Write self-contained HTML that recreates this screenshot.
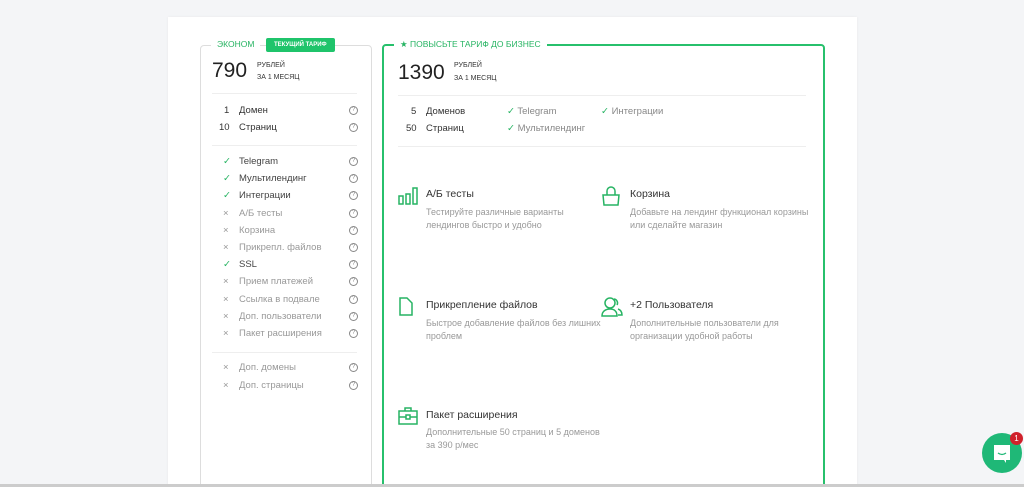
<!DOCTYPE html>
<html><head><meta charset="utf-8"><style>
*{margin:0;padding:0;box-sizing:border-box}
html,body{width:1024px;height:487px;overflow:hidden}
body{background:#f4f5f7;font-family:"Liberation Sans",sans-serif;position:relative}
.card{position:absolute;left:168px;top:17px;width:689px;height:470px;background:#fff;box-shadow:0 0 3px rgba(0,0,0,.05)}
.lb{position:absolute;left:200px;top:45px;width:172px;height:450px;border:1px solid #ddd;border-radius:4px}
.rb{position:absolute;left:382px;top:44px;width:443px;height:450px;border:2px solid #27c06c;border-radius:4px}
.a{position:absolute;white-space:nowrap}
.g{color:#27b463}
.hr{position:absolute;height:1px;background:#eee}
.q{position:absolute;width:9px;height:9px;border:1px solid #888;border-radius:50%;font-size:6px;line-height:7px;text-align:center;color:#888}
.t{font-size:9.5px;color:#333}
.s{font-size:7px;color:#333}
.ft{font-size:10.5px;color:#333}
.fd{font-size:9px;color:#999;line-height:13px}
</style></head><body>
<div class="card"></div>
<div class="lb"></div>
<div class="rb"></div>
<div class="a" style="left:211px;top:39px;background:#fff;padding:0 6px;font-size:8.5px;color:#27b463">ЭКОНОМ</div>
<div class="a" style="left:266px;top:38px;background:#1fc46b;color:#fff;font-size:6px;font-weight:bold;padding:3px 8px;border-radius:2px;height:14px;line-height:8px">ТЕКУЩИЙ ТАРИФ</div>
<div class="a" style="left:394px;top:39px;background:#fff;padding:0 6px;font-size:8.5px;color:#27b463">★ ПОВЫСЬТЕ ТАРИФ ДО БИЗНЕС</div>
<div class="a" style="left:212px;top:59px;font-size:21px;color:#222">790</div>
<div class="a s" style="left:257px;top:62px">РУБЛЕЙ</div>
<div class="a s" style="left:257px;top:74px">ЗА 1 МЕСЯЦ</div>
<div class="a" style="left:398px;top:61px;font-size:21px;color:#222">1390</div>
<div class="a s" style="left:454px;top:62px">РУБЛЕЙ</div>
<div class="a s" style="left:454px;top:75px">ЗА 1 МЕСЯЦ</div>
<div class="hr" style="left:212px;top:93px;width:145px"></div>
<div class="hr" style="left:212px;top:145px;width:145px"></div>
<div class="hr" style="left:212px;top:352px;width:145px"></div>
<div class="hr" style="left:398px;top:95px;width:408px"></div>
<div class="hr" style="left:398px;top:146px;width:408px"></div>
<div class="a t" style="left:224px;top:105px">1</div><div class="a t" style="left:239px;top:105px">Домен</div>
<div class="a t" style="left:219px;top:122px">10</div><div class="a t" style="left:239px;top:122px">Страниц</div>
<div class="q" style="left:349px;top:106px">?</div><div class="q" style="left:349px;top:123px">?</div>
<div class="a t" style="left:411px;top:106px">5</div><div class="a t" style="left:426px;top:106px">Доменов</div>
<div class="a t" style="left:406px;top:123px">50</div><div class="a t" style="left:426px;top:123px">Страниц</div>
<div class="a" style="left:507px;top:106px;font-size:9.5px;color:#888"><span class="g">✓</span> Telegram</div>
<div class="a" style="left:507px;top:123px;font-size:9.5px;color:#888"><span class="g">✓</span> Мультилендинг</div>
<div class="a" style="left:601px;top:106px;font-size:9.5px;color:#888"><span class="g">✓</span> Интеграции</div>
<div id="L"></div>
<script>
var r=[[1,"Telegram"],[1,"Мультилендинг"],[1,"Интеграции"],[0,"А/Б тесты"],[0,"Корзина"],[0,"Прикрепл. файлов"],[1,"SSL"],[0,"Прием платежей"],[0,"Ссылка в подвале"],[0,"Доп. пользователи"],[0,"Пакет расширения"],[2],[0,"Доп. домены"],[0,"Доп. страницы"]];
var h="";r.forEach(function(x,i){if(x[0]==2)return;var y=156+i*17.2;
h+='<div class="a" style="left:223px;top:'+y+'px;font-size:9.5px;color:'+(x[0]?'#27b463':'#999')+'">'+(x[0]?'✓':'×')+'</div>';
h+='<div class="a" style="left:239px;top:'+y+'px;font-size:9.5px;color:'+(x[0]?'#444':'#999')+'">'+x[1]+'</div>';
h+='<div class="q" style="left:349px;top:'+(y+1)+'px">?</div>';});
document.getElementById("L").innerHTML=h;
</script>
<svg class="a" style="left:398px;top:186px" width="20" height="20" fill="none" stroke="#27b463" stroke-width="1.5"><rect x="1" y="10" width="4" height="8"/><rect x="8" y="8" width="4" height="10"/><rect x="15" y="2" width="4" height="16"/></svg>
<div class="a ft" style="left:426px;top:188px">А/Б тесты</div>
<div class="a fd" style="left:426px;top:206px">Тестируйте различные варианты<br>лендингов быстро и удобно</div>
<svg class="a" style="left:601px;top:186px" width="20" height="20" fill="none" stroke="#27b463" stroke-width="1.5"><path d="M2 9h16l-1 10H3z"/><path d="M6 9V5a4 4 0 0 1 8 0v4"/></svg>
<div class="a ft" style="left:630px;top:188px">Корзина</div>
<div class="a fd" style="left:630px;top:206px">Добавьте на лендинг функционал корзины<br>или сделайте магазин</div>
<svg class="a" style="left:398px;top:297px" width="16" height="20" fill="none" stroke="#27b463" stroke-width="1.5"><path d="M2 1h7l5 5v12H2z"/></svg>
<div class="a ft" style="left:426px;top:299px">Прикрепление файлов</div>
<div class="a fd" style="left:426px;top:317px">Быстрое добавление файлов без лишних<br>проблем</div>
<svg class="a" style="left:601px;top:296px" width="22" height="22" fill="none" stroke="#27b463" stroke-width="1.5"><circle cx="9" cy="7" r="5"/><path d="M1 20c0-5 4-7 8-7s7 2 7 7z"/><path d="M13 3a4 4 0 0 1 3 6M17 13c3 1 4 3 4 6h-4"/></svg>
<div class="a ft" style="left:630px;top:299px">+2 Пользователя</div>
<div class="a fd" style="left:630px;top:317px">Дополнительные пользователи для<br>организации удобной работы</div>
<svg class="a" style="left:398px;top:407px" width="20" height="18" fill="none" stroke="#27b463" stroke-width="1.5"><rect x="1" y="4" width="18" height="13"/><path d="M7 4V1h6v3M1 10h18"/><rect x="8" y="8" width="4" height="4" fill="#fff"/></svg>
<div class="a ft" style="left:426px;top:409px">Пакет расширения</div>
<div class="a fd" style="left:426px;top:426px">Дополнительные 50 страниц и 5 доменов<br>за 390 р/мес</div>
<div class="a" style="left:0;top:484px;width:1024px;height:3px;background:#ccc"></div>
<div class="a" style="left:982px;top:433px;width:40px;height:40px;border-radius:50%;background:#1fb877"></div>
<svg class="a" style="left:992px;top:443px" width="20" height="20"><path d="M2 2h16v15h-4v3l-2-3H2z" fill="#fff"/><path d="M6 10q4 3 8 0" stroke="#1fb877" stroke-width="1.3" fill="none"/></svg>
<div class="a" style="left:1010px;top:432px;width:13px;height:13px;border-radius:50%;background:#d0212b;color:#fff;font-size:8px;text-align:center;line-height:13px">1</div>
</body></html>
